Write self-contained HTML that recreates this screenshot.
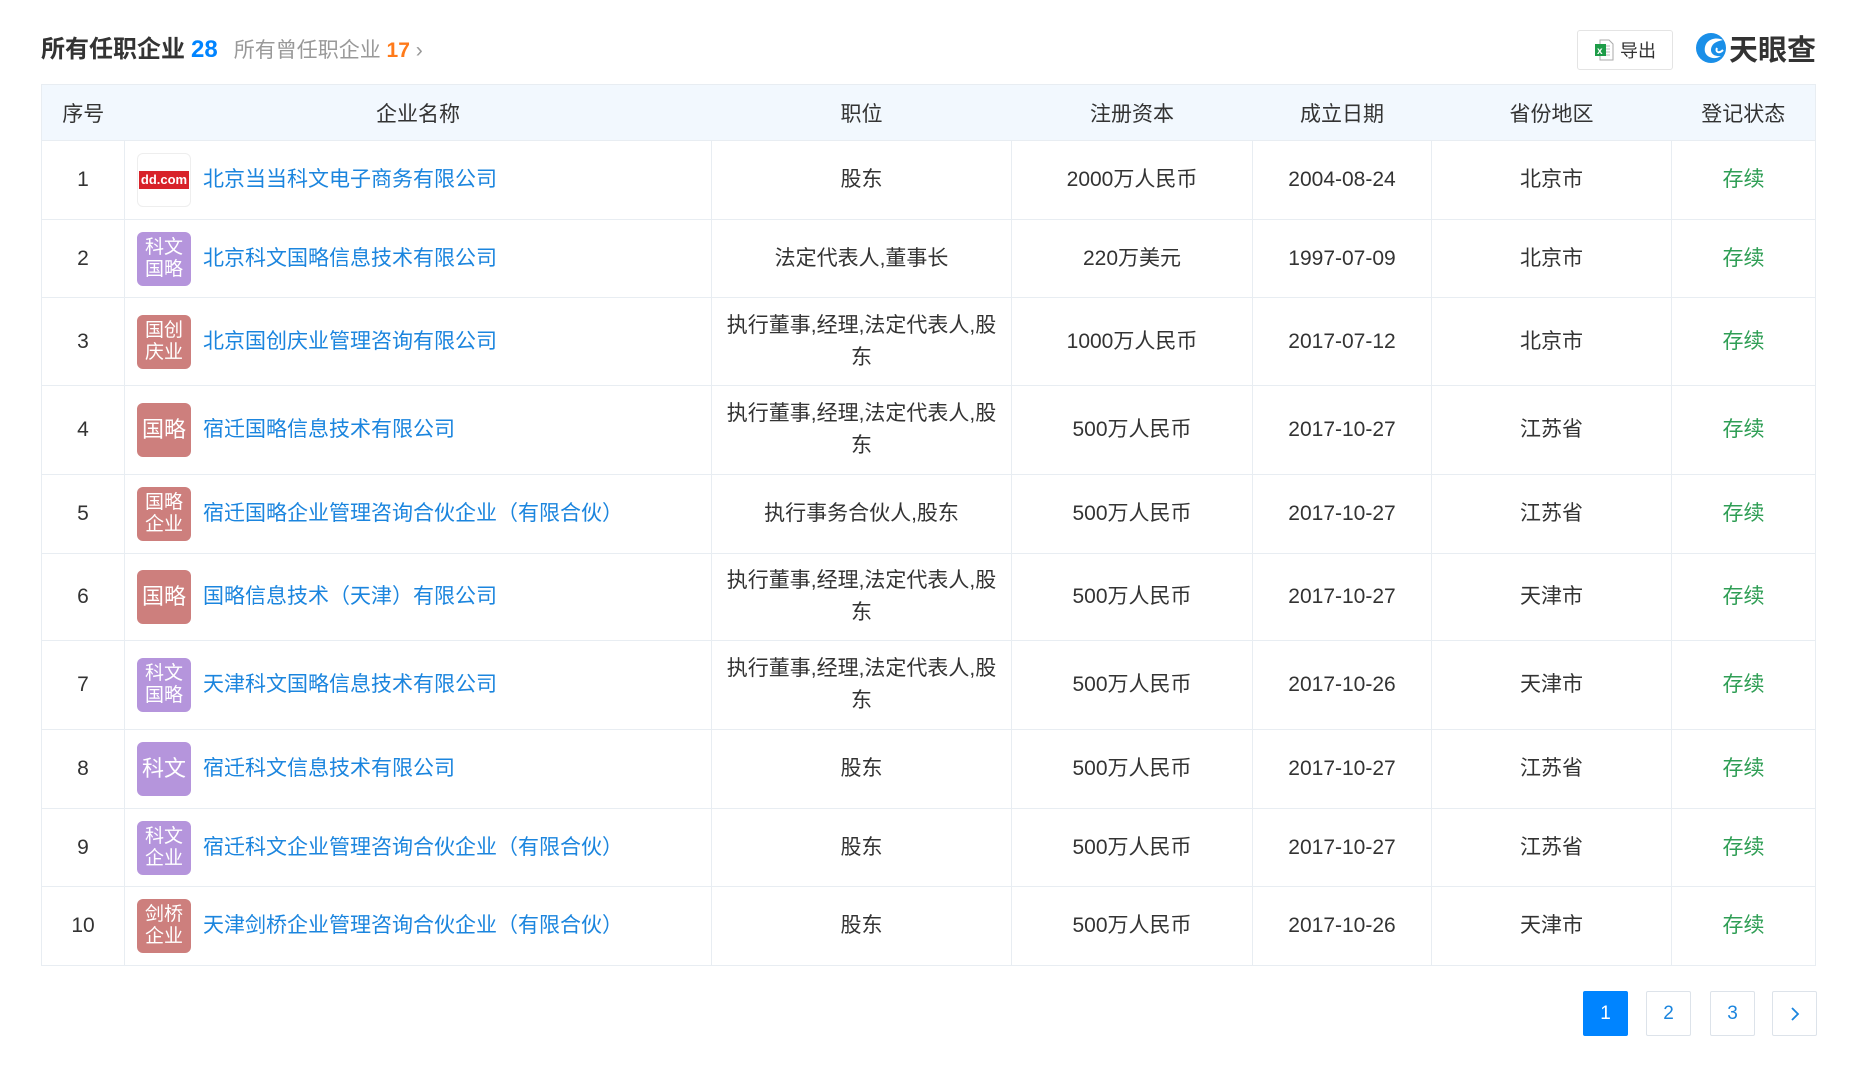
<!DOCTYPE html>
<html><head><meta charset="utf-8">
<style>
*{margin:0;padding:0;box-sizing:border-box}
body{width:1851px;height:1071px;background:#fff;font-family:"Liberation Sans","Noto Sans CJK SC",sans-serif;color:#333;position:relative;overflow:hidden}
.title{position:absolute;left:41px;top:29px;font-size:24px;font-weight:bold;color:#333;white-space:nowrap}
.title .n{color:#0084ff;margin-left:6px}
.title .sub{font-weight:normal;color:#999;font-size:21px;margin-left:16px}
.title .o{color:#ff7a1a;font-weight:bold;font-size:21px}
.exp{position:absolute;left:1577px;top:30px;width:96px;height:40px;border:1px solid #e4e4e4;border-radius:3px;font-size:18px;color:#333;display:flex;align-items:center;justify-content:center;gap:6px}
.logo{position:absolute;left:1695px;top:31px;height:34px;display:flex;align-items:center;font-size:29px;font-weight:bold;color:#333;white-space:nowrap}
table{position:absolute;left:41px;top:84px;width:1774px;border-collapse:collapse;table-layout:fixed;font-size:21px}
th{background:#f2f8fe;font-weight:normal;color:#333;height:56px;border-top:1px solid #e8edf2;border-bottom:1px solid #e8edf2}
th:first-child{border-left:1px solid #e8edf2}th:last-child{border-right:1px solid #e8edf2}
td{border:1px solid #e8edf2;text-align:center;color:#333;line-height:32px;padding:0 12px}
td.nm{text-align:left;padding:0 10px 0 12px}
.nmw{display:flex;align-items:center}
.lg{width:54px;height:54px;border-radius:6px;color:#fff;font-size:19px;line-height:22px;display:flex;align-items:center;justify-content:center;text-align:center;flex:none;margin-right:12px}
.p{background:#b595dc}.r{background:#cd7f7d}
.lg.big{font-size:22px}
.dd{background:#fff;border:1px solid #eee;flex-direction:column}
.a{color:#1b85de}
.g{color:#2f9e55}
.pg{position:absolute;top:991px;width:45px;height:45px;border:1px solid #dde3ea;border-radius:2px;display:flex;align-items:center;justify-content:center;font-size:19px;color:#1b85de}
.pg.on{background:#0084ff;color:#fff;border-color:#0084ff}
</style></head><body>
<div class="title">所有任职企业<span class="n">28</span><span class="sub">所有曾任职企业 <span class="o">17</span> ›</span></div>
<div class="exp"><svg width="20" height="22" viewBox="0 0 20 22"><path d="M6 1h9l4 4v16H6z" fill="#fff" stroke="#aaa"/><path d="M10 7h6M10 10h6M10 13h6M10 16h6" stroke="#bbb"/><rect x="1" y="5" width="11" height="12" fill="#1e9c48"/><text x="3" y="15" font-size="10" fill="#fff" font-family="Liberation Sans" font-weight="bold">x</text></svg>导出</div>
<div class="logo"><svg width="32" height="32" viewBox="0 0 32 32"><circle cx="16" cy="16" r="15" fill="#1a8fe8"/><path d="M28 8 C20 4 8 8 10 20 C12 26 20 28 26 24 C18 25 14 20 17 14 C19 10 24 9 28 8Z" fill="#fff"/><path d="M22 16 C20 20 24 22 28 18" stroke="#fff" stroke-width="2" fill="none"/></svg><span style="margin-left:2px">天眼查</span></div>
<table>
<colgroup><col style="width:83px"><col style="width:587px"><col style="width:300px"><col style="width:241px"><col style="width:179px"><col style="width:240px"><col style="width:144px"></colgroup>
<tr><th>序号</th><th>企业名称</th><th>职位</th><th>注册资本</th><th>成立日期</th><th>省份地区</th><th>登记状态</th></tr>
<tr style="height:79px"><td>1</td><td class="nm"><div class="nmw"><div class="lg dd"><div style="background:#d8232a;color:#fff;font-size:13px;line-height:18px;width:50px;text-align:center;font-weight:bold">dd.com</div></div><span class="a">北京当当科文电子商务有限公司</span></div></td><td>股东</td><td>2000万人民币</td><td>2004-08-24</td><td>北京市</td><td class="g">存续</td></tr>
<tr style="height:78px"><td>2</td><td class="nm"><div class="nmw"><div class="lg p">科文<br>国略</div><span class="a">北京科文国略信息技术有限公司</span></div></td><td>法定代表人,董事长</td><td>220万美元</td><td>1997-07-09</td><td>北京市</td><td class="g">存续</td></tr>
<tr style="height:88px"><td>3</td><td class="nm"><div class="nmw"><div class="lg r">国创<br>庆业</div><span class="a">北京国创庆业管理咨询有限公司</span></div></td><td>执行董事,经理,法定代表人,股东</td><td>1000万人民币</td><td>2017-07-12</td><td>北京市</td><td class="g">存续</td></tr>
<tr style="height:89px"><td>4</td><td class="nm"><div class="nmw"><div class="lg r big">国略</div><span class="a">宿迁国略信息技术有限公司</span></div></td><td>执行董事,经理,法定代表人,股东</td><td>500万人民币</td><td>2017-10-27</td><td>江苏省</td><td class="g">存续</td></tr>
<tr style="height:79px"><td>5</td><td class="nm"><div class="nmw"><div class="lg r">国略<br>企业</div><span class="a">宿迁国略企业管理咨询合伙企业（有限合伙）</span></div></td><td>执行事务合伙人,股东</td><td>500万人民币</td><td>2017-10-27</td><td>江苏省</td><td class="g">存续</td></tr>
<tr style="height:87px"><td>6</td><td class="nm"><div class="nmw"><div class="lg r big">国略</div><span class="a">国略信息技术（天津）有限公司</span></div></td><td>执行董事,经理,法定代表人,股东</td><td>500万人民币</td><td>2017-10-27</td><td>天津市</td><td class="g">存续</td></tr>
<tr style="height:89px"><td>7</td><td class="nm"><div class="nmw"><div class="lg p">科文<br>国略</div><span class="a">天津科文国略信息技术有限公司</span></div></td><td>执行董事,经理,法定代表人,股东</td><td>500万人民币</td><td>2017-10-26</td><td>天津市</td><td class="g">存续</td></tr>
<tr style="height:79px"><td>8</td><td class="nm"><div class="nmw"><div class="lg p big">科文</div><span class="a">宿迁科文信息技术有限公司</span></div></td><td>股东</td><td>500万人民币</td><td>2017-10-27</td><td>江苏省</td><td class="g">存续</td></tr>
<tr style="height:78px"><td>9</td><td class="nm"><div class="nmw"><div class="lg p">科文<br>企业</div><span class="a">宿迁科文企业管理咨询合伙企业（有限合伙）</span></div></td><td>股东</td><td>500万人民币</td><td>2017-10-27</td><td>江苏省</td><td class="g">存续</td></tr>
<tr style="height:79px"><td>10</td><td class="nm"><div class="nmw"><div class="lg r">剑桥<br>企业</div><span class="a">天津剑桥企业管理咨询合伙企业（有限合伙）</span></div></td><td>股东</td><td>500万人民币</td><td>2017-10-26</td><td>天津市</td><td class="g">存续</td></tr>
</table>
<div class="pg on" style="left:1583px">1</div>
<div class="pg" style="left:1646px">2</div>
<div class="pg" style="left:1710px">3</div>
<div class="pg" style="left:1772px"><svg width="12" height="16" viewBox="0 0 12 16"><path d="M3 2l6 6-6 6" stroke="#1b85de" stroke-width="1.8" fill="none"/></svg></div>
</body></html>
